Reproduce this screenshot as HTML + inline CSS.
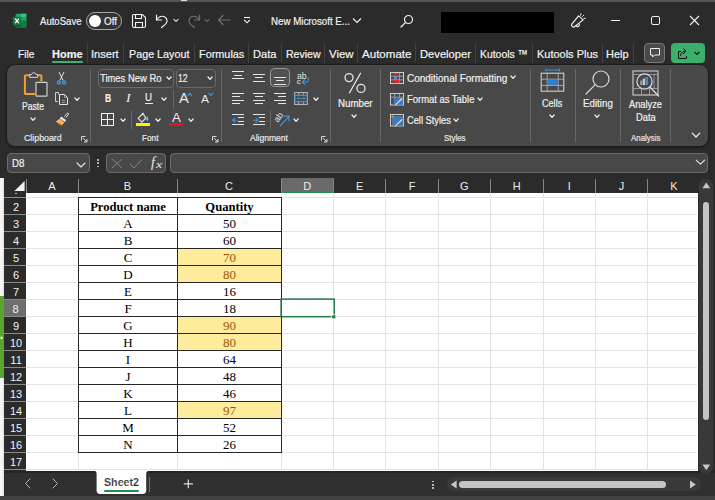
<!DOCTYPE html>
<html>
<head>
<meta charset="utf-8">
<title>Excel</title>
<style>
*{box-sizing:border-box;margin:0;padding:0}
html,body{width:715px;height:500px;overflow:hidden;background:#2b2b2b}
body{font-family:"Liberation Sans",sans-serif;color:#fff;position:relative}
.abs{position:absolute}
.t{position:absolute;white-space:nowrap;line-height:1;-webkit-text-stroke:0.2px currentColor}
/* title bar */
#topline{left:0;top:0;width:715px;height:2px;background:#555}
/* ribbon */
#ribbon{left:6.2px;top:63.8px;width:702.6px;height:83.4px;background:#484848;border-radius:9px;border:1px solid #1c1c1c;box-shadow:0 1px 2px #1c1c1c}
.sep{position:absolute;width:1px;background:#5a5a5a}
.glabel{font-size:9.5px;color:#e6e6e6}
/* formula bar */
.fbox{position:absolute;top:153px;height:19px;background:#3b3b3b;border:1px solid #595959;border-radius:4px}
/* grid */
#grid{left:26px;top:193px;width:671.6px;height:277.5px;background:#fff}
.ch{position:absolute;top:181px;height:12px;font-size:11px;color:#ececec;text-align:center;line-height:1}
.rh{position:absolute;left:4.4px;width:21.8px;height:17px;background:#2b2b2b;font-size:11px;color:#f2f2f2;text-align:center;line-height:1;padding-top:3.8px;padding-left:1.5px;border-bottom:1px solid #8a8a8a}
.vl{position:absolute;top:193px;width:1px;height:277px;background:#e4e4e4}
.hl{position:absolute;left:26px;width:671px;height:1px;background:#e4e4e4}
.cell{position:absolute;height:18px;border:1px solid #262626;font-family:"Liberation Serif",serif;font-size:13px;color:#000;text-align:center;line-height:17px;background:#fff}
.cell.y{background:#ffeb9c;color:#9c5700}
.cell.b{font-weight:bold;font-size:12.6px;line-height:19px}
</style>
</head>
<body>
<div id="topline" class="abs"></div>

<!-- TITLE BAR -->
<div class="abs" style="left:181px;top:0;width:6px;height:1.2px;background:#d8d8d8"></div>
<svg class="abs" style="left:12px;top:13px;" width="16" height="16" viewBox="0 0 16 16" fill="none"><rect x="3.5" y="0.7" width="10.8" height="13.8" rx="1.2" fill="#21a366"/><rect x="8.9" y="0.7" width="5.4" height="3.5" fill="#33c481"/><rect x="8.9" y="4.2" width="5.4" height="3.4" fill="#21a366"/><rect x="8.9" y="7.6" width="5.4" height="3.4" fill="#107c41"/><rect x="3.5" y="7.6" width="5.4" height="3.4" fill="#185c37"/><rect x="3.5" y="11" width="10.8" height="3.5" rx="1" fill="#185c37"/><rect x="8.9" y="11" width="5.4" height="3.5" fill="#107c41"/><rect x="0.8" y="3.7" width="8.4" height="8.4" rx="0.9" fill="#107c41"/><path d="M3.2 5.6 L6.8 10.2 M6.8 5.6 L3.2 10.2" stroke="#fff" stroke-width="1.3"/></svg>
<div class="t" style="left:40.0px;top:16.0px;font-size:11.5px;color:#f2f2f2;transform-origin:0 0;transform:scaleX(0.832);">AutoSave</div>
<div class="abs" style="left:86px;top:12px;width:36px;height:18px;border:1.4px solid #a8a8a8;border-radius:9px;background:#333"></div>
<div class="abs" style="left:89.4px;top:15.2px;width:11.6px;height:11.6px;border-radius:6px;background:#fff"></div>
<div class="t" style="left:104.0px;top:17.0px;font-size:10px;color:#f2f2f2;transform-origin:0 0;transform:scaleX(0.988);">Off</div>
<svg class="abs" style="left:131px;top:13px;" width="16" height="16" viewBox="0 0 16 16" fill="none"><path d="M2.5 1.5 H11.5 L14.5 4.5 V13 a1.5 1.5 0 0 1 -1.5 1.5 H3 a1.5 1.5 0 0 1 -1.5 -1.5 V2.5 a1 1 0 0 1 1 -1 Z" stroke="#f2f2f2" stroke-width="1.1"/><path d="M4.5 1.5 V5.5 H10.5 V1.5 M4.5 14.5 V9.5 H11.5 V14.5" stroke="#f2f2f2" stroke-width="1.1"/></svg>
<svg class="abs" style="left:154px;top:13px;" width="16" height="16" viewBox="0 0 16 16" fill="none"><path d="M2.5 2 V7 H7.5" stroke="#f2f2f2" stroke-width="1.2" stroke-linecap="round" stroke-linejoin="round"/><path d="M2.8 6.8 C4.5 3.6 8.5 2.2 11.2 4.2 C14 6.3 13.4 9.6 11 11.6 L7.5 14.5" stroke="#f2f2f2" stroke-width="1.2" stroke-linecap="round"/></svg>
<svg class="abs" style="left:173px;top:18px;" width="6" height="5" viewBox="0 0 6 5" fill="none"><path d="M0.7 1 L3 3.5 L5.3 1" stroke="#f2f2f2" stroke-width="1.1"/></svg>
<svg class="abs" style="left:186px;top:13px;" width="16" height="16" viewBox="0 0 16 16" fill="none"><path d="M13.5 2 V7 H8.5" stroke="#6f6f6f" stroke-width="1.2" stroke-linecap="round" stroke-linejoin="round"/><path d="M13.2 6.8 C11.5 3.6 7.5 2.2 4.8 4.2 C2 6.3 2.6 9.6 5 11.6 L8.5 14.5" stroke="#6f6f6f" stroke-width="1.2" stroke-linecap="round"/></svg>
<svg class="abs" style="left:204px;top:18px;" width="6" height="5" viewBox="0 0 6 5" fill="none"><path d="M0.7 1 L3 3.5 L5.3 1" stroke="#6f6f6f" stroke-width="1.1"/></svg>
<svg class="abs" style="left:217px;top:14px;" width="14" height="12" viewBox="0 0 14 12" fill="none"><path d="M13 6 H1.5 M6 1.5 L1.5 6 L6 10.5" stroke="#6f6f6f" stroke-width="1.2" stroke-linecap="round" stroke-linejoin="round"/></svg>
<svg class="abs" style="left:243px;top:16px;" width="8" height="8" viewBox="0 0 8 8" fill="none"><path d="M1 1.5 H7" stroke="#f2f2f2" stroke-width="1.1"/><path d="M1.2 4 L4 6.8 L6.8 4" stroke="#f2f2f2" stroke-width="1.1"/></svg>
<div class="t" style="left:270.5px;top:16.0px;font-size:11px;color:#f2f2f2;transform-origin:0 0;transform:scaleX(0.885);">New Microsoft E...</div>
<svg class="abs" style="left:352px;top:17px;" width="10" height="7" viewBox="0 0 10 7" fill="none"><path d="M1 1.5 L5 5.5 L9 1.5" stroke="#f2f2f2" stroke-width="1.1"/></svg>
<svg class="abs" style="left:400px;top:14px;" width="14" height="14" viewBox="0 0 14 14" fill="none"><circle cx="8.5" cy="5.5" r="4" stroke="#f2f2f2" stroke-width="1.2"/><path d="M5.6 8.4 L1 13" stroke="#f2f2f2" stroke-width="1.3" stroke-linecap="round"/></svg>
<div class="abs" style="left:441px;top:12px;width:113px;height:21px;background:#000"></div>
<svg class="abs" style="left:569px;top:12px;" width="18" height="17" viewBox="0 0 18 17" fill="none"><path d="M2.6 12.4 L9.6 3.9 L14.2 7.9 L5.2 15 C3.8 15.6 2.2 13.8 2.6 12.4 Z" stroke="#f2f2f2" stroke-width="1.15" stroke-linejoin="round"/><path d="M7.2 13.4 C7.6 15.4 10.6 15 10.4 12.4" stroke="#f2f2f2" stroke-width="1.1" stroke-linecap="round"/><path d="M11.6 3.2 L12 1.8 M13.6 4.4 L14.8 3.2 M15 6.6 L16.2 6.3" stroke="#f2f2f2" stroke-width="1" stroke-linecap="round"/></svg>
<div class="abs" style="left:611px;top:20px;width:9px;height:1px;background:#f2f2f2"></div>
<div class="abs" style="left:651px;top:16px;width:9px;height:9px;border:1px solid #f2f2f2;border-radius:2px"></div>
<svg class="abs" style="left:689px;top:15px;" width="11" height="11" viewBox="0 0 11 11" fill="none"><path d="M1 1 L10 10 M10 1 L1 10" stroke="#f2f2f2" stroke-width="1.1"/></svg>

<!-- TABS -->
<div class="t" style="left:17.5px;top:49.0px;font-size:11.5px;color:#f2f2f2;transform-origin:0 0;transform:scaleX(0.890);">File</div>
<div class="t" style="left:52.0px;top:49.0px;font-size:11.5px;color:#f2f2f2;font-weight:bold;transform-origin:0 0;transform:scaleX(0.955);">Home</div>
<div class="t" style="left:91.3px;top:49.0px;font-size:11.5px;color:#f2f2f2;transform-origin:0 0;transform:scaleX(0.963);">Insert</div>
<div class="t" style="left:128.6px;top:49.0px;font-size:11.5px;color:#f2f2f2;transform-origin:0 0;transform:scaleX(0.935);">Page Layout</div>
<div class="t" style="left:198.7px;top:49.0px;font-size:11.5px;color:#f2f2f2;transform-origin:0 0;transform:scaleX(0.945);">Formulas</div>
<div class="t" style="left:252.5px;top:49.0px;font-size:11.5px;color:#f2f2f2;transform-origin:0 0;transform:scaleX(0.967);">Data</div>
<div class="t" style="left:285.5px;top:49.0px;font-size:11.5px;color:#f2f2f2;transform-origin:0 0;transform:scaleX(0.915);">Review</div>
<div class="t" style="left:328.5px;top:49.0px;font-size:11.5px;color:#f2f2f2;transform-origin:0 0;transform:scaleX(0.991);">View</div>
<div class="t" style="left:362.0px;top:49.0px;font-size:11.5px;color:#f2f2f2;transform-origin:0 0;transform:scaleX(1.006);">Automate</div>
<div class="t" style="left:420.0px;top:49.0px;font-size:11.5px;color:#f2f2f2;transform-origin:0 0;transform:scaleX(0.973);">Developer</div>
<div class="t" style="left:480.0px;top:49.0px;font-size:11.5px;color:#f2f2f2;transform-origin:0 0;transform:scaleX(0.905);">Kutools ™</div>
<div class="t" style="left:537.0px;top:49.0px;font-size:11.5px;color:#f2f2f2;transform-origin:0 0;transform:scaleX(0.954);">Kutools Plus</div>
<div class="t" style="left:606.0px;top:49.0px;font-size:11.5px;color:#f2f2f2;transform-origin:0 0;transform:scaleX(0.951);">Help</div>
<div class="abs" style="left:86.5px;top:43.5px;width:1px;height:19.5px;background:#424242"></div>
<div class="abs" style="left:123.0px;top:43.5px;width:1px;height:19.5px;background:#424242"></div>
<div class="abs" style="left:193.5px;top:43.5px;width:1px;height:19.5px;background:#424242"></div>
<div class="abs" style="left:247.5px;top:43.5px;width:1px;height:19.5px;background:#424242"></div>
<div class="abs" style="left:280.5px;top:43.5px;width:1px;height:19.5px;background:#424242"></div>
<div class="abs" style="left:323.5px;top:43.5px;width:1px;height:19.5px;background:#424242"></div>
<div class="abs" style="left:356.5px;top:43.5px;width:1px;height:19.5px;background:#424242"></div>
<div class="abs" style="left:415.0px;top:43.5px;width:1px;height:19.5px;background:#424242"></div>
<div class="abs" style="left:475.0px;top:43.5px;width:1px;height:19.5px;background:#424242"></div>
<div class="abs" style="left:532.0px;top:43.5px;width:1px;height:19.5px;background:#424242"></div>
<div class="abs" style="left:601.5px;top:43.5px;width:1px;height:19.5px;background:#424242"></div>
<div class="abs" style="left:632.5px;top:43.5px;width:1px;height:19.5px;background:#424242"></div>
<div class="abs" style="left:52px;top:61px;width:31px;height:2px;background:#3fb26f;border-radius:1px"></div>
<div class="abs" style="left:644px;top:43px;width:21px;height:20px;background:#4a4a4a;border:1px solid #787878;border-radius:4px"></div>
<svg class="abs" style="left:649px;top:47px;" width="12" height="12" viewBox="0 0 12 12" fill="none"><path d="M1.5 1.5 H10.5 V8 H5.5 L3.5 10 V8 H1.5 Z" stroke="#f2f2f2" stroke-width="1" stroke-linejoin="round"/></svg>
<div class="abs" style="left:671px;top:43px;width:34px;height:20px;background:#3ab06c;border-radius:4px"></div>
<svg class="abs" style="left:675.6px;top:46.6px;" width="13" height="13" viewBox="0 0 13 13" fill="none"><path d="M5 4.5 H2.5 V11.5 H10.5 V9" stroke="#111" stroke-width="1" stroke-linejoin="round"/><path d="M4.5 8.5 C5 5.5 7 4.2 9 4.2 M7.5 1.8 L10 4.2 L7.5 6.6" stroke="#111" stroke-width="1" stroke-linecap="round" stroke-linejoin="round"/></svg>
<svg class="abs" style="left:694px;top:51px;" width="6" height="5" viewBox="0 0 6 5" fill="none"><path d="M0.7 1 L3 3.4 L5.3 1" stroke="#111" stroke-width="1.1"/></svg>

<!-- RIBBON -->
<div id="ribbon" class="abs"></div>
<svg class="abs" style="left:23px;top:71px;" width="26" height="27" viewBox="0 0 26 27" fill="none"><path d="M7 4.2 H3 a1.1 1.1 0 0 0 -1.1 1.1 V22 a1.1 1.1 0 0 0 1.1 1.1 H12" stroke="#f0a030" stroke-width="2" fill="none"/><path d="M14.5 4.2 H17.3 a1.1 1.1 0 0 1 1.1 1.1 V10.2" stroke="#f0a030" stroke-width="2" fill="none"/><path d="M6.8 6.4 V3.4 H8.6 a2.2 2.2 0 0 1 4.3 0 H14.7 V6.4 Z" stroke="#d6d6d6" stroke-width="1" fill="#484848"/><rect x="13" y="11.4" width="11" height="13.8" rx="0.8" stroke="#d0d0d0" stroke-width="1.2" fill="#404040"/></svg>
<div class="t" style="left:22.4px;top:102.0px;font-size:10px;color:#f0f0f0;transform-origin:0 0;transform:scaleX(0.860);">Paste</div>
<svg class="abs" style="left:30.2px;top:117.1px;" width="6.1" height="4.300000000000001" viewBox="0 0 6.1 4.300000000000001" fill="none"><path d="M1 1 L3.05 3.3000000000000003 L5.1 1" stroke="#f0f0f0" stroke-width="1.25" stroke-linecap="round" stroke-linejoin="round"/></svg>
<svg class="abs" style="left:56px;top:71px;" width="11" height="14" viewBox="0 0 11 14" fill="none"><path d="M3 1 L7.2 9.5 M8 1 L3.8 9.5" stroke="#e6e6e6" stroke-width="1"/><circle cx="2.9" cy="11.4" r="1.5" stroke="#3a96dd" stroke-width="1.5"/><circle cx="8.1" cy="11.4" r="1.5" stroke="#3a96dd" stroke-width="1.5"/></svg>
<svg class="abs" style="left:54px;top:91px;" width="15" height="15" viewBox="0 0 15 15" fill="none"><path d="M4.5 3.5 V1.5 H1.5 V10.5 H4" stroke="#cfcfcf" stroke-width="1"/><path d="M5.5 3.5 H10.5 L13.5 6.5 V13.5 H5.5 Z" stroke="#e6e6e6" stroke-width="1" fill="#484848"/><path d="M10.5 3.5 V6.5 H13.5 M7.8 9.5 H11.2 M7.8 11.5 H11.2" stroke="#bdbdbd" stroke-width="0.7"/></svg>
<svg class="abs" style="left:74.2px;top:97.3px;" width="6.1" height="4.300000000000001" viewBox="0 0 6.1 4.300000000000001" fill="none"><path d="M1 1 L3.05 3.3000000000000003 L5.1 1" stroke="#f0f0f0" stroke-width="1.25" stroke-linecap="round" stroke-linejoin="round"/></svg>
<svg class="abs" style="left:55px;top:112px;" width="14" height="15" viewBox="0 0 14 15" fill="none"><path d="M9.5 4.5 L12.2 1.3 a0.9 0.9 0 0 1 1.3 1.2 L10.8 5.8" stroke="#e6e6e6" stroke-width="1" fill="none"/><path d="M6.2 4.6 L11.2 8.2 L9.8 10 L4.8 6.4 Z" fill="#e6e6e6"/><path d="M4.6 6.8 L9.4 10.4 L6.5 13.6 L0.8 9.4 Z" fill="#f6bd4e"/><path d="M4 10.4 L7.6 12.4 L6.5 13.6 L3 11.4 Z" fill="#ef8f1c"/></svg>
<div class="t" style="left:24.4px;top:133.0px;font-size:9.5px;color:#e8e8e8;transform-origin:0 0;transform:scaleX(0.925);">Clipboard</div>
<svg class="abs" style="left:81px;top:135.5px;" width="7" height="7" viewBox="0 0 7 7" fill="none"><path d="M0.5 4.5 V0.5 H4.5" stroke="#d8d8d8" stroke-width="1"/><path d="M2.2 2.2 L6 6 M6 3 V6 H3" stroke="#d8d8d8" stroke-width="1"/></svg>
<div class="abs" style="left:90.3px;top:69px;width:1px;height:73px;background:#676767"></div>
<div class="abs" style="left:97.5px;top:68.5px;width:76px;height:19.5px;border:1px solid #6a6a6a;border-radius:4px;background:#454545"></div>
<div class="t" style="left:100.0px;top:73.0px;font-size:11px;color:#f0f0f0;transform-origin:0 0;transform:scaleX(0.858);">Times New Ro</div>
<svg class="abs" style="left:165.7px;top:76.1px;" width="6.1" height="4.300000000000001" viewBox="0 0 6.1 4.300000000000001" fill="none"><path d="M1 1 L3.05 3.3000000000000003 L5.1 1" stroke="#f0f0f0" stroke-width="1.25" stroke-linecap="round" stroke-linejoin="round"/></svg>
<div class="abs" style="left:175.5px;top:68.5px;width:40px;height:19.5px;border:1px solid #6a6a6a;border-radius:4px;background:#454545"></div>
<div class="t" style="left:177.8px;top:73.0px;font-size:11px;color:#f0f0f0;transform-origin:0 0;transform:scaleX(0.785);">12</div>
<svg class="abs" style="left:207.2px;top:76.1px;" width="6.1" height="4.300000000000001" viewBox="0 0 6.1 4.300000000000001" fill="none"><path d="M1 1 L3.05 3.3000000000000003 L5.1 1" stroke="#f0f0f0" stroke-width="1.25" stroke-linecap="round" stroke-linejoin="round"/></svg>
<div class="t" style="left:104.6px;top:93.0px;font-size:10.5px;color:#f0f0f0;font-weight:bold;transform-origin:0 0;transform:scaleX(0.818);">B</div>
<div class="t" style="left:126.0px;top:93.0px;font-size:11.5px;color:#f0f0f0;font-family:'Liberation Serif',serif;font-style:italic;transform-origin:0 0;transform:scaleX(1.201);-webkit-text-stroke:0;">I</div>
<div class="t" style="left:145.4px;top:93.0px;font-size:10px;color:#f0f0f0;transform-origin:0 0;transform:scaleX(0.969);">U</div>
<div class="abs" style="left:145px;top:103px;width:8px;height:1px;background:#e8e8e8"></div>
<svg class="abs" style="left:161.4px;top:97.1px;" width="6.1" height="4.300000000000001" viewBox="0 0 6.1 4.300000000000001" fill="none"><path d="M1 1 L3.05 3.3000000000000003 L5.1 1" stroke="#f0f0f0" stroke-width="1.25" stroke-linecap="round" stroke-linejoin="round"/></svg>
<div class="abs" style="left:172.5px;top:90px;width:1px;height:18.5px;background:#676767"></div>
<div class="t" style="left:178.8px;top:91.0px;font-size:14px;color:#ececec;transform-origin:0 0;transform:scaleX(1.049);-webkit-text-stroke:0;">A</div>
<svg class="abs" style="left:186.5px;top:92px;" width="6" height="5" viewBox="0 0 6 5" fill="none"><path d="M0.8 3.6 L2.8 1.2 L4.8 3.6" stroke="#3a96dd" stroke-width="1.1" stroke-linecap="round"/></svg>
<div class="t" style="left:200.8px;top:94.0px;font-size:11px;color:#ececec;transform-origin:0 0;transform:scaleX(1.090);-webkit-text-stroke:0;">A</div>
<svg class="abs" style="left:207.6px;top:92px;" width="6" height="5" viewBox="0 0 6 5" fill="none"><path d="M0.8 1.2 L2.8 3.6 L4.8 1.2" stroke="#3a96dd" stroke-width="1.1" stroke-linecap="round"/></svg>
<svg class="abs" style="left:100.5px;top:113px;" width="13" height="13" viewBox="0 0 13 13" fill="none"><rect x="0.5" y="0.5" width="12" height="12" stroke="#f2f2f2" stroke-width="1"/><path d="M6.5 0.5 V12.5 M0.5 6.5 H12.5" stroke="#f2f2f2" stroke-width="1"/></svg>
<svg class="abs" style="left:119.5px;top:118.1px;" width="6.1" height="4.300000000000001" viewBox="0 0 6.1 4.300000000000001" fill="none"><path d="M1 1 L3.05 3.3000000000000003 L5.1 1" stroke="#f0f0f0" stroke-width="1.25" stroke-linecap="round" stroke-linejoin="round"/></svg>
<div class="abs" style="left:130.9px;top:110px;width:1px;height:19px;background:#676767"></div>
<svg class="abs" style="left:137px;top:112px;" width="13" height="11" viewBox="0 0 13 11" fill="none"><path d="M6 1.3 L8.7 6.2 L4.9 10.1 L1.2 6.4 Z" stroke="#dcdcdc" stroke-width="1.3" stroke-linejoin="round"/><path d="M9.9 3.8 C11.6 6 11.6 7.8 10.4 9.2 C9.2 8.6 9 6.6 9.9 3.8 Z" fill="#79bff5"/></svg>
<div class="abs" style="left:136px;top:123px;width:13.5px;height:3.4px;background:#fff100"></div>
<svg class="abs" style="left:155.1px;top:118.1px;" width="6.1" height="4.300000000000001" viewBox="0 0 6.1 4.300000000000001" fill="none"><path d="M1 1 L3.05 3.3000000000000003 L5.1 1" stroke="#f0f0f0" stroke-width="1.25" stroke-linecap="round" stroke-linejoin="round"/></svg>
<div class="t" style="left:172.2px;top:112.0px;font-size:12px;color:#ececec;transform-origin:0 0;transform:scaleX(1.099);-webkit-text-stroke:0;">A</div>
<div class="abs" style="left:169.4px;top:123px;width:13.6px;height:3.4px;background:#e8101c"></div>
<svg class="abs" style="left:188.4px;top:118.1px;" width="6.1" height="4.300000000000001" viewBox="0 0 6.1 4.300000000000001" fill="none"><path d="M1 1 L3.05 3.3000000000000003 L5.1 1" stroke="#f0f0f0" stroke-width="1.25" stroke-linecap="round" stroke-linejoin="round"/></svg>
<div class="t" style="left:141.6px;top:133.0px;font-size:9.5px;color:#e8e8e8;transform-origin:0 0;transform:scaleX(0.863);">Font</div>
<svg class="abs" style="left:212px;top:135.5px;" width="7" height="7" viewBox="0 0 7 7" fill="none"><path d="M0.5 4.5 V0.5 H4.5" stroke="#d8d8d8" stroke-width="1"/><path d="M2.2 2.2 L6 6 M6 3 V6 H3" stroke="#d8d8d8" stroke-width="1"/></svg>
<div class="abs" style="left:221.0px;top:69px;width:1px;height:73px;background:#676767"></div>
<div class="abs" style="left:232.4px;top:70.9px;width:12px;height:1px;background:#e4e4e4"></div><div class="abs" style="left:234.4px;top:74.5px;width:8px;height:1px;background:#e4e4e4"></div><div class="abs" style="left:232.4px;top:77.9px;width:12px;height:1px;background:#e4e4e4"></div>
<div class="abs" style="left:253.4px;top:73.5px;width:12px;height:1px;background:#e4e4e4"></div><div class="abs" style="left:255.4px;top:76.9px;width:8px;height:1px;background:#e4e4e4"></div><div class="abs" style="left:253.4px;top:80.5px;width:12px;height:1px;background:#e4e4e4"></div>
<div class="abs" style="left:270.3px;top:68px;width:19.7px;height:19.4px;border:1.2px solid #9a9a9a;border-radius:4.5px;background:#525252"></div>
<div class="abs" style="left:274.4px;top:76.5px;width:12px;height:1px;background:#e4e4e4"></div><div class="abs" style="left:276.4px;top:80.1px;width:8px;height:1px;background:#e4e4e4"></div><div class="abs" style="left:274.4px;top:83.5px;width:12px;height:1px;background:#e4e4e4"></div>
<div class="t" style="left:296.6px;top:72.0px;font-size:8.5px;color:#e6e6e6;transform-origin:0 0;transform:scaleX(1.015);-webkit-text-stroke:0;">ab</div>
<div class="t" style="left:296.8px;top:78.0px;font-size:8px;color:#e6e6e6;transform-origin:0 0;transform:scaleX(1.000);-webkit-text-stroke:0;">c</div>
<svg class="abs" style="left:301px;top:77px;" width="9" height="8" viewBox="0 0 9 8" fill="none"><path d="M7.2 0.8 V3.8 a1.2 1.2 0 0 1 -1.2 1.2 H1.6 M3.8 2.6 L1.4 5 L3.8 7.4" stroke="#3a96dd" stroke-width="1.1" stroke-linecap="round" stroke-linejoin="round"/></svg>
<div class="abs" style="left:232.4px;top:92.9px;width:12px;height:1px;background:#e4e4e4"></div><div class="abs" style="left:232.4px;top:96.2px;width:8px;height:1px;background:#e4e4e4"></div><div class="abs" style="left:232.4px;top:99.5px;width:12px;height:1px;background:#e4e4e4"></div><div class="abs" style="left:232.4px;top:102.9px;width:8px;height:1px;background:#e4e4e4"></div>
<div class="abs" style="left:253.4px;top:92.9px;width:12px;height:1px;background:#e4e4e4"></div><div class="abs" style="left:255.4px;top:96.2px;width:8px;height:1px;background:#e4e4e4"></div><div class="abs" style="left:253.4px;top:99.5px;width:12px;height:1px;background:#e4e4e4"></div><div class="abs" style="left:255.4px;top:102.9px;width:8px;height:1px;background:#e4e4e4"></div>
<div class="abs" style="left:274.4px;top:92.9px;width:12px;height:1px;background:#e4e4e4"></div><div class="abs" style="left:278.4px;top:96.2px;width:8px;height:1px;background:#e4e4e4"></div><div class="abs" style="left:274.4px;top:99.5px;width:12px;height:1px;background:#e4e4e4"></div><div class="abs" style="left:278.4px;top:102.9px;width:8px;height:1px;background:#e4e4e4"></div>
<svg class="abs" style="left:294px;top:92px;" width="14" height="13" viewBox="0 0 14 13" fill="none"><rect x="0.6" y="0.6" width="12.8" height="11.8" stroke="#bdbdbd" stroke-width="1"/><path d="M4.7 0.6 V3.2 M9.3 0.6 V3.2 M4.7 9.8 V12.4 M9.3 9.8 V12.4" stroke="#bdbdbd" stroke-width="0.8"/><rect x="0.9" y="3.4" width="12.2" height="6.2" stroke="#3a96dd" stroke-width="1.1"/><path d="M3 6.5 H11 M4.6 5 L3 6.5 L4.6 8 M9.4 5 L11 6.5 L9.4 8" stroke="#3a96dd" stroke-width="0.9"/></svg>
<svg class="abs" style="left:313.4px;top:97.3px;" width="6.1" height="4.300000000000001" viewBox="0 0 6.1 4.300000000000001" fill="none"><path d="M1 1 L3.05 3.3000000000000003 L5.1 1" stroke="#f0f0f0" stroke-width="1.25" stroke-linecap="round" stroke-linejoin="round"/></svg>
<div class="abs" style="left:232.4px;top:113.8px;width:12px;height:1px;background:#e4e4e4"></div><div class="abs" style="left:238.4px;top:117.3px;width:6px;height:1px;background:#e4e4e4"></div><div class="abs" style="left:238.4px;top:120.8px;width:6px;height:1px;background:#e4e4e4"></div><div class="abs" style="left:232.4px;top:124.3px;width:12px;height:1px;background:#e4e4e4"></div>
<svg class="abs" style="left:232px;top:116.5px;" width="6" height="7" viewBox="0 0 6 7" fill="none"><path d="M5 3.2 H0.8 M2.6 1 L0.6 3.2 L2.6 5.4" stroke="#3a96dd" stroke-width="1.1" stroke-linecap="round" stroke-linejoin="round"/></svg>
<div class="abs" style="left:253.4px;top:113.8px;width:12px;height:1px;background:#e4e4e4"></div><div class="abs" style="left:259.4px;top:117.3px;width:6px;height:1px;background:#e4e4e4"></div><div class="abs" style="left:259.4px;top:120.8px;width:6px;height:1px;background:#e4e4e4"></div><div class="abs" style="left:253.4px;top:124.3px;width:12px;height:1px;background:#e4e4e4"></div>
<svg class="abs" style="left:253px;top:116.5px;" width="6" height="7" viewBox="0 0 6 7" fill="none"><path d="M0.6 3.2 H4.8 M3 1 L5 3.2 L3 5.4" stroke="#3a96dd" stroke-width="1.1" stroke-linecap="round" stroke-linejoin="round"/></svg>
<div class="abs" style="left:270.1px;top:110px;width:1px;height:19px;background:#676767"></div>
<div class="t" style="left:278.2px;top:116.2px;font-size:9px;color:#e0e0e0;-webkit-text-stroke:0;transform-origin:0 7px;transform:rotate(-55deg)">ab</div>
<svg class="abs" style="left:279px;top:114px;" width="12" height="13" viewBox="0 0 12 13" fill="none"><path d="M1.2 11.8 L9.6 2.6 M5.4 2.2 H10 V6.8" stroke="#3a96dd" stroke-width="1.2" stroke-linecap="round" stroke-linejoin="round"/></svg>
<svg class="abs" style="left:293.4px;top:118.1px;" width="6.1" height="4.300000000000001" viewBox="0 0 6.1 4.300000000000001" fill="none"><path d="M1 1 L3.05 3.3000000000000003 L5.1 1" stroke="#f0f0f0" stroke-width="1.25" stroke-linecap="round" stroke-linejoin="round"/></svg>
<div class="t" style="left:250.0px;top:133.0px;font-size:9.5px;color:#e8e8e8;transform-origin:0 0;transform:scaleX(0.899);">Alignment</div>
<svg class="abs" style="left:320.6px;top:135.5px;" width="7" height="7" viewBox="0 0 7 7" fill="none"><path d="M0.5 4.5 V0.5 H4.5" stroke="#d8d8d8" stroke-width="1"/><path d="M2.2 2.2 L6 6 M6 3 V6 H3" stroke="#d8d8d8" stroke-width="1"/></svg>
<div class="abs" style="left:330.1px;top:69px;width:1px;height:73px;background:#676767"></div>
<svg class="abs" style="left:343px;top:72px;" width="24" height="22" viewBox="0 0 24 22" fill="none"><circle cx="6" cy="5.6" r="4" stroke="#e6e6e6" stroke-width="1.3"/><circle cx="18" cy="16.4" r="4" stroke="#e6e6e6" stroke-width="1.3"/><path d="M17.5 1.2 L6.5 20.8" stroke="#e6e6e6" stroke-width="1.3" stroke-linecap="round"/></svg>
<div class="t" style="left:337.8px;top:99.0px;font-size:10px;color:#f0f0f0;transform-origin:0 0;transform:scaleX(0.973);">Number</div>
<svg class="abs" style="left:351.4px;top:114.1px;" width="6.1" height="4.300000000000001" viewBox="0 0 6.1 4.300000000000001" fill="none"><path d="M1 1 L3.05 3.3000000000000003 L5.1 1" stroke="#f0f0f0" stroke-width="1.25" stroke-linecap="round" stroke-linejoin="round"/></svg>
<div class="abs" style="left:379.5px;top:69px;width:1px;height:73px;background:#676767"></div>
<svg class="abs" style="left:390px;top:72px;" width="14" height="12" viewBox="0 0 14 12" fill="none"><rect x="0.5" y="0.5" width="13" height="11" stroke="#cfcfcf" stroke-width="1"/><path d="M0.5 4.2 H13.5 M0.5 7.9 H13.5 M4.6 0.5 V11.5 M9.4 0.5 V11.5" stroke="#bdbdbd" stroke-width="0.7"/><rect x="3.4" y="1" width="4.6" height="3" fill="#e8202a"/><rect x="4.4" y="4.6" width="2.8" height="3" fill="#3a96dd"/><rect x="3.4" y="8.2" width="6" height="3" fill="#e8202a"/></svg>
<div class="t" style="left:406.6px;top:74.0px;font-size:10px;color:#f0f0f0;transform-origin:0 0;transform:scaleX(0.998);">Conditional Formatting</div>
<svg class="abs" style="left:510.2px;top:75.1px;" width="6.1" height="4.300000000000001" viewBox="0 0 6.1 4.300000000000001" fill="none"><path d="M1 1 L3.05 3.3000000000000003 L5.1 1" stroke="#f0f0f0" stroke-width="1.25" stroke-linecap="round" stroke-linejoin="round"/></svg>
<svg class="abs" style="left:390px;top:93px;" width="14" height="13" viewBox="0 0 14 13" fill="none"><rect x="0.5" y="0.5" width="13" height="11.5" stroke="#cfcfcf" stroke-width="1"/><path d="M0.5 4.2 H13.5 M4.6 0.5 V12 M9.4 0.5 V12" stroke="#bdbdbd" stroke-width="0.7"/><rect x="3.5" y="4.6" width="9.6" height="7" fill="#2f7fd0"/><path d="M4 12 L11.5 4.5 L13 6 L5.5 13 Z" fill="#d8d8d8" stroke="#484848" stroke-width="0.5"/></svg>
<div class="t" style="left:406.6px;top:95.0px;font-size:10px;color:#f0f0f0;transform-origin:0 0;transform:scaleX(0.942);">Format as Table</div>
<svg class="abs" style="left:477.4px;top:96.5px;" width="6.1" height="4.300000000000001" viewBox="0 0 6.1 4.300000000000001" fill="none"><path d="M1 1 L3.05 3.3000000000000003 L5.1 1" stroke="#f0f0f0" stroke-width="1.25" stroke-linecap="round" stroke-linejoin="round"/></svg>
<svg class="abs" style="left:390px;top:114px;" width="14" height="13" viewBox="0 0 14 13" fill="none"><rect x="0.5" y="0.5" width="13" height="11.5" stroke="#cfcfcf" stroke-width="1"/><path d="M0.5 3 H13.5 M3 0.5 V12" stroke="#bdbdbd" stroke-width="0.7"/><rect x="3.4" y="3.4" width="9.8" height="8.2" fill="#2f7fd0"/><path d="M4 12 L11.5 4.5 L13 6 L5.5 13 Z" fill="#d8d8d8" stroke="#484848" stroke-width="0.5"/></svg>
<div class="t" style="left:406.6px;top:116.0px;font-size:10px;color:#f0f0f0;transform-origin:0 0;transform:scaleX(0.927);">Cell Styles</div>
<svg class="abs" style="left:453.1px;top:118.1px;" width="6.1" height="4.300000000000001" viewBox="0 0 6.1 4.300000000000001" fill="none"><path d="M1 1 L3.05 3.3000000000000003 L5.1 1" stroke="#f0f0f0" stroke-width="1.25" stroke-linecap="round" stroke-linejoin="round"/></svg>
<div class="t" style="left:444.0px;top:133.0px;font-size:9.5px;color:#e8e8e8;transform-origin:0 0;transform:scaleX(0.831);">Styles</div>
<div class="abs" style="left:529.5px;top:69px;width:1px;height:73px;background:#676767"></div>
<svg class="abs" style="left:540px;top:68px;" width="25" height="25" viewBox="0 0 25 25" fill="none"><path d="M6 2 H19.5 M6 0.6 V3.4 M19.5 0.6 V3.4" stroke="#3a96dd" stroke-width="1"/><rect x="1.2" y="5.2" width="22.6" height="18" stroke="#cfcfcf" stroke-width="1.1"/><path d="M1.2 11.2 H23.8 M1.2 17.4 H23.8 M7.2 5.2 V23.2 M18.2 5.2 V23.2" stroke="#bdbdbd" stroke-width="0.8"/><rect x="7.6" y="11.6" width="10.2" height="5.4" fill="#2f7fd0"/></svg>
<div class="t" style="left:542.2px;top:99.0px;font-size:10px;color:#f0f0f0;transform-origin:0 0;transform:scaleX(0.909);">Cells</div>
<svg class="abs" style="left:549.0px;top:114.1px;" width="6.1" height="4.300000000000001" viewBox="0 0 6.1 4.300000000000001" fill="none"><path d="M1 1 L3.05 3.3000000000000003 L5.1 1" stroke="#f0f0f0" stroke-width="1.25" stroke-linecap="round" stroke-linejoin="round"/></svg>
<div class="abs" style="left:575.1px;top:69px;width:1px;height:73px;background:#676767"></div>
<svg class="abs" style="left:584px;top:68px;" width="28" height="28" viewBox="0 0 28 28" fill="none"><circle cx="17" cy="11" r="8" stroke="#d8d8d8" stroke-width="1.2"/><path d="M11.2 16.6 L2 26" stroke="#d8d8d8" stroke-width="1.2" stroke-linecap="round"/></svg>
<div class="t" style="left:582.6px;top:99.0px;font-size:10px;color:#f0f0f0;transform-origin:0 0;transform:scaleX(0.975);">Editing</div>
<svg class="abs" style="left:594.0px;top:114.1px;" width="6.1" height="4.300000000000001" viewBox="0 0 6.1 4.300000000000001" fill="none"><path d="M1 1 L3.05 3.3000000000000003 L5.1 1" stroke="#f0f0f0" stroke-width="1.25" stroke-linecap="round" stroke-linejoin="round"/></svg>
<div class="abs" style="left:620.1px;top:69px;width:1px;height:73px;background:#676767"></div>
<svg class="abs" style="left:632px;top:70px;" width="28" height="27" viewBox="0 0 28 27" fill="none"><rect x="1" y="1" width="25" height="24" stroke="#cfcfcf" stroke-width="1.1"/><path d="M1 4.5 H26 M1 18.5 H26 M9.5 18.5 V25 M17.5 18.5 V25 M22 4.5 V18.5" stroke="#a8a8a8" stroke-width="0.8"/><circle cx="12.5" cy="11.5" r="7.6" fill="#484848" stroke="#dcdcdc" stroke-width="1.2"/><rect x="8.2" y="10.5" width="2.2" height="4.5" fill="#9a9a9a"/><rect x="10.8" y="8.6" width="2.2" height="6.4" fill="#c8c8c8"/><rect x="13.4" y="7" width="2.6" height="8" fill="#2f8fe0"/><path d="M18 17 L26.5 26" stroke="#dcdcdc" stroke-width="1.3" stroke-linecap="round"/></svg>
<div class="t" style="left:629.0px;top:100.0px;font-size:10px;color:#f0f0f0;transform-origin:0 0;transform:scaleX(0.928);">Analyze</div>
<div class="t" style="left:635.8px;top:113.0px;font-size:10px;color:#f0f0f0;transform-origin:0 0;transform:scaleX(0.937);">Data</div>
<div class="t" style="left:630.6px;top:133.0px;font-size:9.5px;color:#e8e8e8;transform-origin:0 0;transform:scaleX(0.831);">Analysis</div>
<div class="abs" style="left:670.1px;top:69px;width:1px;height:73px;background:#676767"></div>
<svg class="abs" style="left:691px;top:132px;" width="10" height="7" viewBox="0 0 10 7" fill="none"><path d="M1.2 1.2 L5 5 L8.8 1.2" stroke="#f0f0f0" stroke-width="1.2" stroke-linecap="round" stroke-linejoin="round"/></svg>

<!-- FORMULA BAR -->
<div class="abs" style="left:6.6px;top:153px;width:83px;height:19.6px;border:1px solid #6a6a6a;border-radius:4px;background:#484848"></div>
<div class="t" style="left:11.6px;top:158.0px;font-size:10.5px;color:#f0f0f0;transform-origin:0 0;transform:scaleX(0.924);">D8</div>
<svg class="abs" style="left:76px;top:161.5px;" width="10" height="6" viewBox="0 0 10 6" fill="none"><path d="M1 1 L5 5 L9 1" stroke="#e6e6e6" stroke-width="1.1" stroke-linecap="round" stroke-linejoin="round"/></svg>
<div class="abs" style="left:97px;top:159.1px;width:1.6px;height:1.6px;background:#dcdcdc;border-radius:1px"></div>
<div class="abs" style="left:97px;top:162.4px;width:1.6px;height:1.6px;background:#dcdcdc;border-radius:1px"></div>
<div class="abs" style="left:97px;top:165.7px;width:1.6px;height:1.6px;background:#dcdcdc;border-radius:1px"></div>
<div class="abs" style="left:106px;top:153px;width:60px;height:19.6px;border:1px solid #6a6a6a;border-radius:4px;background:#484848"></div>
<svg class="abs" style="left:110.5px;top:158px;" width="12" height="11" viewBox="0 0 12 11" fill="none"><path d="M1 1 L11 10 M11 1 L1 10" stroke="#858585" stroke-width="1"/></svg>
<svg class="abs" style="left:128.5px;top:158px;" width="14" height="11" viewBox="0 0 14 11" fill="none"><path d="M1 6 L5 10 L13 1.5" stroke="#858585" stroke-width="1"/></svg>
<div class="t" style="left:151.0px;top:156.0px;font-size:14px;color:#ececec;font-family:'Liberation Serif',serif;font-style:italic;-webkit-text-stroke:0;">f</div>
<div class="t" style="left:155.8px;top:160.0px;font-size:10.5px;color:#ececec;font-family:'Liberation Serif',serif;font-style:italic;transform-origin:0 0;transform:scaleX(1.330);-webkit-text-stroke:0;">x</div>
<div class="abs" style="left:170px;top:153px;width:538px;height:19.6px;border:1px solid #6a6a6a;border-radius:4px;background:#484848"></div>
<svg class="abs" style="left:695px;top:159px;" width="11" height="7" viewBox="0 0 11 7" fill="none"><path d="M1.2 1.2 L5.4 5.2 L9.6 1.2" stroke="#e6e6e6" stroke-width="1.1" stroke-linecap="round" stroke-linejoin="round"/></svg>

<!-- SHEET -->
<div class="abs" style="left:0;top:178px;width:4.4px;height:318px;background:linear-gradient(90deg,#f6f6f6 0,#f2f2f2 70%,#d8d8d8 100%)"></div>
<div class="abs" style="left:0;top:296.2px;width:4.4px;height:82.3px;background:#5aa52d"></div>
<svg class="abs" style="left:0;top:335px" width="5" height="6"><path d="M0.7 1.2 L3.2 2.8 L0.7 4.4 Z" fill="#fff"/></svg>
<div class="abs" style="left:4.4px;top:177.5px;width:693.2px;height:15.5px;background:#2b2b2b"></div>
<div id="grid" class="abs"></div>
<div class="ch" style="left:26px;width:52px">A</div>
<div class="abs" style="left:26px;top:178.5px;width:1px;height:14.5px;background:#858585"></div>
<div class="ch" style="left:78px;width:99px">B</div>
<div class="abs" style="left:78px;top:178.5px;width:1px;height:14.5px;background:#858585"></div>
<div class="vl" style="left:78px"></div>
<div class="ch" style="left:177px;width:104px">C</div>
<div class="abs" style="left:177px;top:178.5px;width:1px;height:14.5px;background:#858585"></div>
<div class="vl" style="left:177px"></div>
<div class="abs" style="left:281px;top:178px;width:52.5px;height:15px;background:#6a6a6a;border-bottom:1.4px solid #1e8e4e"></div>
<div class="ch" style="left:281px;width:52.5px">D</div>
<div class="abs" style="left:281px;top:178.5px;width:1px;height:14.5px;background:#858585"></div>
<div class="vl" style="left:281px"></div>
<div class="ch" style="left:333.5px;width:52.39999999999998px">E</div>
<div class="abs" style="left:333px;top:178.5px;width:1px;height:14.5px;background:#858585"></div>
<div class="vl" style="left:333px"></div>
<div class="ch" style="left:385.9px;width:52.30000000000001px">F</div>
<div class="abs" style="left:385px;top:178.5px;width:1px;height:14.5px;background:#858585"></div>
<div class="vl" style="left:385px"></div>
<div class="ch" style="left:438.2px;width:52.400000000000034px">G</div>
<div class="abs" style="left:438px;top:178.5px;width:1px;height:14.5px;background:#858585"></div>
<div class="vl" style="left:438px"></div>
<div class="ch" style="left:490.6px;width:52.39999999999998px">H</div>
<div class="abs" style="left:490px;top:178.5px;width:1px;height:14.5px;background:#858585"></div>
<div class="vl" style="left:490px"></div>
<div class="ch" style="left:543px;width:52.39999999999998px">I</div>
<div class="abs" style="left:543px;top:178.5px;width:1px;height:14.5px;background:#858585"></div>
<div class="vl" style="left:543px"></div>
<div class="ch" style="left:595.4px;width:52.39999999999998px">J</div>
<div class="abs" style="left:595px;top:178.5px;width:1px;height:14.5px;background:#858585"></div>
<div class="vl" style="left:595px"></div>
<div class="ch" style="left:647.8px;width:52.40000000000009px">K</div>
<div class="abs" style="left:647px;top:178.5px;width:1px;height:14.5px;background:#858585"></div>
<div class="vl" style="left:647px"></div>
<svg class="abs" style="left:4.6px;top:178px" width="21" height="15"><path d="M19.6 3 L19.6 13 L9.4 13 Z" fill="#f4f4f4"/></svg>
<div class="abs" style="left:4.4px;top:193px;width:21.8px;height:5px;background:#2b2b2b;border-bottom:1px solid #8a8a8a"></div>
<div class="hl" style="top:197px"></div>
<div class="abs" style="left:15px;top:193px;width:2px;height:1.4px;background:#b8b8b8"></div>
<div class="rh" style="top:198px">2</div>
<div class="hl" style="top:214px"></div>
<div class="rh" style="top:215px">3</div>
<div class="hl" style="top:231px"></div>
<div class="rh" style="top:232px">4</div>
<div class="hl" style="top:248px"></div>
<div class="rh" style="top:249px">5</div>
<div class="hl" style="top:265px"></div>
<div class="rh" style="top:266px">6</div>
<div class="hl" style="top:282px"></div>
<div class="rh" style="top:283px">7</div>
<div class="hl" style="top:299px"></div>
<div class="rh" style="top:300px;background:#6e6e6e;border-right:1.4px solid #1e8e4e">8</div>
<div class="hl" style="top:316px"></div>
<div class="rh" style="top:317px">9</div>
<div class="hl" style="top:333px"></div>
<div class="rh" style="top:334px">10</div>
<div class="hl" style="top:350px"></div>
<div class="rh" style="top:351px">11</div>
<div class="hl" style="top:367px"></div>
<div class="rh" style="top:368px">12</div>
<div class="hl" style="top:384px"></div>
<div class="rh" style="top:385px">13</div>
<div class="hl" style="top:401px"></div>
<div class="rh" style="top:402px">14</div>
<div class="hl" style="top:418px"></div>
<div class="rh" style="top:419px">15</div>
<div class="hl" style="top:435px"></div>
<div class="rh" style="top:436px">16</div>
<div class="hl" style="top:452px"></div>
<div class="rh" style="top:453px">17</div>
<div class="hl" style="top:469px"></div>
<div class="cell b" style="left:78px;top:197px;width:100px">Product name</div>
<div class="cell b" style="left:177px;top:197px;width:105px">Quantity</div>
<div class="cell" style="left:78px;top:214px;width:100px">A</div>
<div class="cell" style="left:177px;top:214px;width:105px">50</div>
<div class="cell" style="left:78px;top:231px;width:100px">B</div>
<div class="cell" style="left:177px;top:231px;width:105px">60</div>
<div class="cell" style="left:78px;top:248px;width:100px">C</div>
<div class="cell y" style="left:177px;top:248px;width:105px">70</div>
<div class="cell" style="left:78px;top:265px;width:100px">D</div>
<div class="cell y" style="left:177px;top:265px;width:105px">80</div>
<div class="cell" style="left:78px;top:282px;width:100px">E</div>
<div class="cell" style="left:177px;top:282px;width:105px">16</div>
<div class="cell" style="left:78px;top:299px;width:100px">F</div>
<div class="cell" style="left:177px;top:299px;width:105px">18</div>
<div class="cell" style="left:78px;top:316px;width:100px">G</div>
<div class="cell y" style="left:177px;top:316px;width:105px">90</div>
<div class="cell" style="left:78px;top:333px;width:100px">H</div>
<div class="cell y" style="left:177px;top:333px;width:105px">80</div>
<div class="cell" style="left:78px;top:350px;width:100px">I</div>
<div class="cell" style="left:177px;top:350px;width:105px">64</div>
<div class="cell" style="left:78px;top:367px;width:100px">J</div>
<div class="cell" style="left:177px;top:367px;width:105px">48</div>
<div class="cell" style="left:78px;top:384px;width:100px">K</div>
<div class="cell" style="left:177px;top:384px;width:105px">46</div>
<div class="cell" style="left:78px;top:401px;width:100px">L</div>
<div class="cell y" style="left:177px;top:401px;width:105px">97</div>
<div class="cell" style="left:78px;top:418px;width:100px">M</div>
<div class="cell" style="left:177px;top:418px;width:105px">52</div>
<div class="cell" style="left:78px;top:435px;width:100px">N</div>
<div class="cell" style="left:177px;top:435px;width:105px">26</div>
<svg class="abs" style="left:278px;top:296px" width="60" height="24"><rect x="3.1" y="3.1" width="53.2" height="17.6" fill="none" stroke="#237a4b" stroke-width="1.5"/><rect x="53.4" y="18.4" width="4.6" height="4.6" fill="#fff"/><rect x="54.2" y="19.2" width="3.2" height="3.2" fill="#237a4b"/></svg>

<!-- BOTTOM -->
<div class="abs" style="left:5px;top:470.5px;width:710px;height:25.5px;background:#303030"></div>
<div class="abs" style="left:4.4px;top:470.5px;width:711px;height:2.6px;background:#242424"></div>
<div class="abs" style="left:0;top:496px;width:715px;height:4px;background:#404040"></div>
<svg class="abs" style="left:24px;top:478px;" width="8" height="11" viewBox="0 0 8 11" fill="none"><path d="M6 1 L1.5 5.5 L6 10" stroke="#b8b8b8" stroke-width="1" stroke-linecap="round" stroke-linejoin="round"/></svg>
<svg class="abs" style="left:50.5px;top:478px;" width="8" height="11" viewBox="0 0 8 11" fill="none"><path d="M2 1 L6.5 5.5 L2 10" stroke="#b8b8b8" stroke-width="1" stroke-linecap="round" stroke-linejoin="round"/></svg>
<svg class="abs" style="left:93px;top:470px;" width="57" height="25" viewBox="0 0 57 25" fill="none"><path d="M0 0.4 H57 C54.5 0.4 53.2 1.6 53.2 4 V20.5 C53.2 22.8 52 24 49.8 24 H7 C4.8 24 3.6 22.8 3.6 20.5 V4 C3.6 1.6 2.5 0.4 0 0.4 Z" fill="#ffffff"/></svg>
<div class="t" style="left:104.0px;top:477.0px;font-size:11.5px;color:#262626;font-weight:bold;transform-origin:0 0;transform:scaleX(0.928);-webkit-text-stroke:0.22px #fff;">Sheet2</div>
<div class="abs" style="left:104px;top:490.4px;width:35px;height:1.6px;background:#1e8e4e;border-radius:1px"></div>
<div class="abs" style="left:148.6px;top:477px;width:1px;height:14.5px;background:#6e6e6e"></div>
<svg class="abs" style="left:183px;top:479px;" width="11" height="10" viewBox="0 0 11 10" fill="none"><path d="M5.3 0.4 V9.2 M0.7 4.8 H9.9" stroke="#e0e0e0" stroke-width="1.2"/></svg>
<div class="abs" style="left:432.2px;top:480.6px;width:1.8px;height:1.8px;background:#e0e0e0;border-radius:1px"></div>
<div class="abs" style="left:432.2px;top:484px;width:1.8px;height:1.8px;background:#e0e0e0;border-radius:1px"></div>
<div class="abs" style="left:432.2px;top:487.4px;width:1.8px;height:1.8px;background:#e0e0e0;border-radius:1px"></div>
<div class="abs" style="left:446.5px;top:477px;width:254px;height:13.5px;background:#393939;border-radius:7px"></div>
<svg class="abs" style="left:450px;top:479.5px;" width="8" height="9" viewBox="0 0 8 9" fill="none"><path d="M6.6 0.6 V8.4 L0.8 4.5 Z" fill="#c8c8c8"/></svg>
<div class="abs" style="left:459px;top:480.6px;width:207px;height:7.4px;background:#c4c4c4;border-radius:4px"></div>
<svg class="abs" style="left:689px;top:479.5px;" width="8" height="9" viewBox="0 0 8 9" fill="none"><path d="M1 0.6 V8.4 L6.8 4.5 Z" fill="#c8c8c8"/></svg>
<div class="abs" style="left:698.8px;top:178.5px;width:14.6px;height:295px;background:#393939;border-radius:7px"></div>
<svg class="abs" style="left:702px;top:181.5px;" width="9" height="7" viewBox="0 0 9 7" fill="none"><path d="M0.4 6.2 H8.2 L4.3 0.6 Z" fill="#c8c8c8"/></svg>
<div class="abs" style="left:702.6px;top:201.6px;width:6.8px;height:218px;background:#c4c4c4;border-radius:4px"></div>
<svg class="abs" style="left:702px;top:463.5px;" width="9" height="7" viewBox="0 0 9 7" fill="none"><path d="M0.4 0.6 H8.2 L4.3 6.2 Z" fill="#c8c8c8"/></svg>
</body>
</html>
